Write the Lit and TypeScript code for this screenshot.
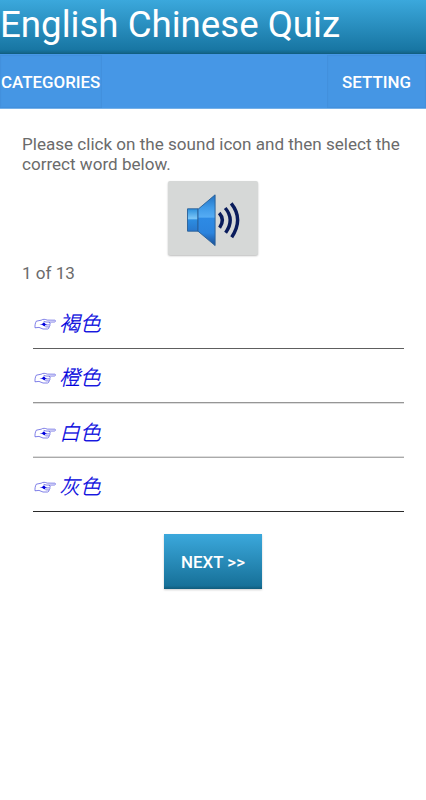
import { LitElement, html, css } from "lit";
import { customElement, property } from "lit/decorators.js";

@customElement("sound-icon")
class SoundIcon extends LitElement {
  static styles = css`
    :host { display: block; width: 54px; height: 54px; }
    svg { display: block; }
  `;
  render() {
    return html`<svg width="54" height="54" viewBox="0 0 54 54" aria-hidden="true">
      <defs>
        <linearGradient id="cone" x1="0" y1="0" x2="0" y2="1">
          <stop offset="0" stop-color="#1f6fc0" />
          <stop offset="0.25" stop-color="#3f9ae8" />
          <stop offset="0.44" stop-color="#55acf4" />
          <stop offset="0.46" stop-color="#2d8ae4" />
          <stop offset="0.75" stop-color="#2b84de" />
          <stop offset="1" stop-color="#1b4f96" />
        </linearGradient>
        <linearGradient id="box" x1="0" y1="0" x2="0" y2="1">
          <stop offset="0" stop-color="#2b8fdc" />
          <stop offset="0.43" stop-color="#7cc6f7" />
          <stop offset="0.5" stop-color="#2c8ce0" />
          <stop offset="1" stop-color="#2877cc" />
        </linearGradient>
      </defs>
      <path d="M.5 14.8H11V37.2H.5z" fill="url(#box)" stroke="#285f96" stroke-width=".9" />
      <path d="M11 15.3 28.1.8V51.6L11 37.2z" fill="url(#cone)" stroke="#285f96" stroke-width=".9" />
      <g fill="none" stroke="#0a1c5c" stroke-width="3.4">
        <path d="M32.2 19Q38.3 25.7 32.6 33.7" />
        <path d="M38.2 14Q48 25.5 38.6 38.7" />
        <path d="M44.2 9.4Q56.8 25 44.7 43.2" />
      </g>
    </svg>`;
  }
}

@customElement("answer-row")
class AnswerRow extends LitElement {
  @property() word = "";
  static styles = css`
    :host { display: flex; box-sizing: border-box; width: 371px; height: 30px; align-items: center; color: #00d; font: italic 300 20.7px/30px Roboto, "Noto Sans CJK SC", sans-serif; }
    .hand { display: block; flex: none; width: 27px; height: 14px; margin-right: -0.7px; overflow: visible; }
    .word { white-space: nowrap; -webkit-text-stroke: 0.3px #00d; }
  `;
  render() {
    return html`<svg class="hand" viewBox="0 0 27 14" fill="none" stroke="#3c3cdc" stroke-width=".65" stroke-linejoin="round" aria-hidden="true">
        <path d="M3.3 4.2C5 3.6 7 3.6 8.2 3.2 10 2 12 2.1 14.2 3.1L21.8 3.2C23 3.5 22.6 5 21.2 5L15.8 5.1M3.3 4.2C2.2 6 1.8 8.8 2 10.8L6 10.4 10 12H14.6C16 11.5 16.4 10.6 15.7 9.9 17 9.6 17.3 8.5 16.5 7.9 17.7 7.3 17.3 5.7 15.8 5.1L13 5 10.6 4.3" />
        <path d="M15.7 9.9H12.6M16.5 7.9H13" />
        <path d="M6.5 7.2 9 6.9 11 5.2 12.2 6.8 14 7.4 12 8 12.6 9.5 10.8 9 9 7.8z" fill="#00d" stroke="none" />
      </svg><span class="word" lang="zh-CN">${this.word}</span>`;
  }
}

@customElement("app-root")
class AppRoot extends LitElement {
  static styles = css`
    :host { display: block; height: 800px; background: #fff; overflow: hidden; font-family: Roboto, sans-serif; }
    header { height: 54px; box-sizing: border-box; padding-top: 3px; background: linear-gradient(#3ba8dc, #1876a3 92%, #14688e 97%, #105b7b); color: #fff; font-size: 36.65px; line-height: 44px; white-space: nowrap; }
    nav { display: flex; justify-content: space-between; height: 55px; background: #4697e6; box-shadow: inset 0 -1px #74b0e8; }
    button { border: 0; margin: 0; padding: 0; font: 500 16.9px/20px Roboto, sans-serif; color: #fff; }
    .tab { background: #4596e4; margin: 1px 0; padding-top: 1px; box-shadow: inset 0 0 1px 1px #4290dc; }
    .categories { width: 102px; text-align: left; padding-left: 1px; white-space: nowrap; }
    .setting { width: 99px; }
    main { display: flex; flex-direction: column; padding: 26px 22px 0; color: #6b6b6b; font-size: 17.07px; line-height: 19.5px; }
    p { margin: 0; white-space: nowrap; }
    .sound { align-self: center; display: flex; width: 90px; height: 74px; margin-top: 7px; padding: 13px 0 0 19px; box-sizing: border-box; border-radius: 2px; background: #d6d8d7; box-shadow: 0 1px 2px #0004; }
    .count { margin-top: 9px; }
    ul { list-style: none; margin: 11.5px 0 0 11px; padding: 0; width: 371px; }
    li { display: flex; flex-direction: column; justify-content: space-between; height: 54px; box-sizing: border-box; padding-top: 14px; }
    li i { height: 1px; background: #5e5e5e; }
    li:nth-child(2) i { background: #969696; box-shadow: 0 1px #ddd; }
    li:nth-child(3) i { background: #aaa; box-shadow: 0 -1px #ddd; }
    li:nth-child(3) { height: 55px; padding-top: 15px; }
    li:nth-child(4) i { background: #2a2a2a; }
    .next { align-self: center; width: 98px; height: 55px; margin-top: 22px; padding-top: 1px; background: linear-gradient(#3ba8dc, #177199 94%, #105b7b); box-shadow: 0 1px 2px #0003; }
  `;
  private words = ["褐色", "橙色", "白色", "灰色"];
  render() {
    return html`
      <header>English Chinese Quiz</header>
      <nav>
        <button class="tab categories">CATEGORIES</button>
        <button class="tab setting">SETTING</button>
      </nav>
      <main>
        <p>Please click on the sound icon and then select the<br />correct word below.</p>
        <button class="sound" aria-label="Play sound"><sound-icon></sound-icon></button>
        <p class="count">1 of 13</p>
        <ul>
          ${this.words.map((w) => html`<li><answer-row .word=${w}></answer-row><i></i></li>`)}
        </ul>
        <button class="next">NEXT &gt;&gt;</button>
      </main>
    `;
  }
}
